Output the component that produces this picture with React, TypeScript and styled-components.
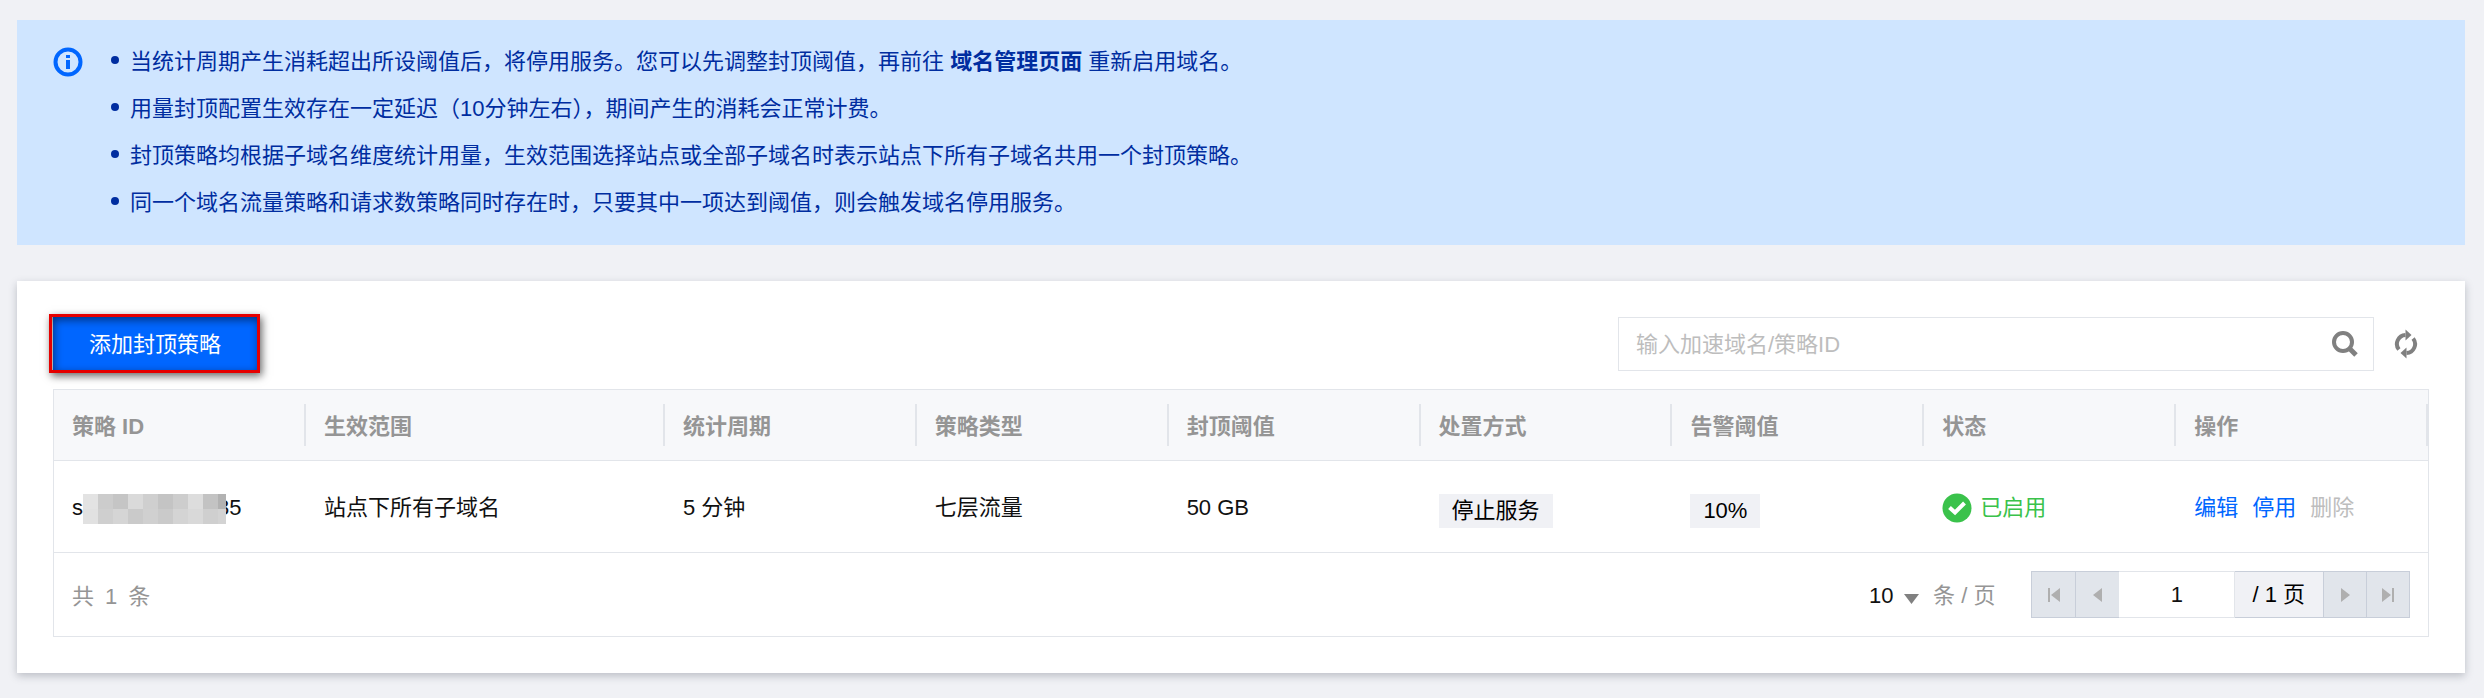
import React from "react";
import styled, { createGlobalStyle, css } from "styled-components";

const color = {
  page: "#f0f1f5",
  line: "#e2e5ea",
  control: "#e1e5eb",
  controlLine: "#c8ced9",
  brand: "#0066ff",
  notice: "#002da0",
  text: "#111111",
  muted: "#959595",
  faint: "#bdbdbd",
  success: "#3ac24b",
};

const GlobalStyle = createGlobalStyle`
  * { box-sizing: border-box; }
  body {
    margin: 0;
    background: ${color.page};
    color: ${color.text};
    font-family: "Liberation Sans", "Noto Sans CJK SC", sans-serif;
    font-size: 22px;
    line-height: 32px;
  }
  button, input, select { font: inherit; color: inherit; margin: 0; padding: 0; }
`;

const Page = styled.main`
  display: flex;
  flex-direction: column;
  gap: 36px;
  padding: 20px 19px 25px 17px;
`;

const Notice = styled.section`
  display: flex;
  gap: 28px;
  padding: 18px 36px 19px;
  background: #cfe5ff;
  color: ${color.notice};
`;

const NoticeIcon = styled.svg`
  flex: none;
  width: 30px;
  height: 30px;
  margin-top: 9px;
`;

const NoticeList = styled.ul`
  margin: 0;
  padding: 0;
  list-style: none;
`;

const NoticeItem = styled.li`
  display: flex;
  align-items: center;
  gap: 11px;
  line-height: 47px;

  &::before {
    content: "";
    flex: none;
    width: 8px;
    height: 8px;
    margin-bottom: 3px;
    border-radius: 50%;
    background: currentColor;
  }
`;

const NoticeLink = styled.a`
  color: inherit;
  font-weight: 700;
  text-decoration: none;
`;

const Card = styled.section`
  padding: 36px;
  background: #ffffff;
  box-shadow: 0 3px 8px rgba(40, 45, 60, 0.26);
`;

const Toolbar = styled.div`
  display: flex;
  align-items: center;
  margin-bottom: 18px;
`;

const PrimaryButton = styled.button`
  position: relative;
  height: 54px;
  padding: 2px 36px 0;
  border: 0;
  background: ${color.brand};
  color: #ffffff;
  white-space: nowrap;

  &::after {
    content: "";
    position: absolute;
    inset: -3px -3px -2px -4px;
    border: 3px solid #e60000;
    box-shadow: 2px 3px 8px rgba(0, 0, 0, 0.6), inset 2px 3px 8px rgba(0, 0, 0, 0.5);
    pointer-events: none;
  }
`;

const SearchBox = styled.form`
  display: flex;
  align-items: center;
  flex: 0 1 756px;
  height: 54px;
  margin-left: auto;
  border: 1px solid ${color.line};
`;

const SearchInput = styled.input`
  flex: 1;
  min-width: 0;
  height: 52px;
  padding: 2px 0 0 17px;
  border: 0;
  background: transparent;
  outline: none;

  &::placeholder { color: ${color.faint}; opacity: 1; }
`;

const IconButton = styled.button`
  display: flex;
  align-items: center;
  justify-content: center;
  width: 56px;
  height: 52px;
  border: 0;
  background: transparent;
  color: #808080;
`;

const RefreshButton = styled(IconButton)`
  width: 46px;
  margin-left: 9px;
`;

const TableFrame = styled.div`
  border: 1px solid ${color.line};
`;

const Table = styled.table`
  width: 100%;
  table-layout: fixed;
  border-collapse: separate;
  border-spacing: 0;
`;

const Column = styled.col<{ $wide?: boolean }>`
  width: ${(p) => (p.$wide ? "auto" : "10.61%")};
`;

const HeadCell = styled.th`
  height: 71px;
  padding: 0;
  border-bottom: 1px solid ${color.line};
  background: #f7f8fa;
  color: ${color.muted};
  text-align: left;
`;

const HeadLabel = styled.div`
  height: 42px;
  padding-left: 18px;
  border-right: 2px solid ${color.line};
  line-height: 46px;
`;

const Cell = styled.td`
  height: 92px;
  padding: 2px 0 0 18px;
  border-bottom: 1px solid ${color.line};
  white-space: nowrap;
`;

const Inline = styled.div<{ $gap?: number }>`
  display: flex;
  align-items: center;
  gap: ${(p) => p.$gap ?? 0}px;
`;

const Mosaic = styled.svg`
  position: relative;
  z-index: 1;
  flex: none;
  margin: 2px -9px 0 0;
`;

const Tag = styled.span`
  display: block;
  width: fit-content;
  height: 34px;
  margin-top: 6px;
  padding: 0 13px;
  background: ${color.page};
  color: #000000;
  line-height: 34px;
`;

const Status = styled(Inline)`
  color: ${color.success};
`;

const ActionButton = styled.button`
  border: 0;
  background: transparent;
  color: ${color.brand};

  &:disabled { color: ${color.faint}; }
`;

const Footer = styled.div`
  display: flex;
  align-items: center;
  height: 83px;
  padding: 0 18px;
`;

const Total = styled(Inline)`
  margin-right: auto;
  padding-top: 4px;
  color: ${color.muted};
`;

const PageSize = styled.label`
  display: flex;
  align-items: center;
  gap: 14px;
  margin-right: 36px;
  padding-top: 2px;
  color: ${color.muted};
`;

const SelectWrap = styled.span`
  position: relative;
  display: block;
`;

const Select = styled.select`
  display: block;
  width: 50px;
  height: 32px;
  appearance: none;
  border: 0;
  background: transparent;
  color: ${color.text};
`;

const Caret = styled.svg`
  position: absolute;
  right: 0;
  top: 14px;
  pointer-events: none;
`;

const Pager = styled.nav`
  display: flex;
  height: 47px;
`;

const segment = css`
  height: 47px;
  border: 1px solid ${color.controlLine};
  border-left-width: 0;
`;

const PagerButton = styled.button<{ $first?: boolean; $open?: boolean }>`
  ${segment}
  display: flex;
  align-items: center;
  justify-content: center;
  width: ${(p) => (p.$first ? 45 : 43)}px;
  border-left-width: ${(p) => (p.$first ? 1 : 0)}px;
  border-right-width: ${(p) => (p.$open ? 0 : 1)}px;
  background: ${color.control};
  color: #afafaf;
`;

const PageInput = styled.input`
  ${segment}
  width: 116px;
  border-color: ${color.line};
  background: #ffffff;
  text-align: center;
  outline: none;
`;

const PageCount = styled.span`
  ${segment}
  padding: 0 18px 0 17px;
  background: ${color.page};
  color: #000000;
  line-height: 45px;
`;

const mosaicRows = [
  ["#e3e3e3", "#cccccc", "#c5c5c5", "#dadada", "#cfcfcf", "#c4c4c4", "#cdcdcd", "#dddddd", "#c3c3c3", "#b2b2b2"],
  ["#e1e1e1", "#cfcfcf", "#d5d5d5", "#cacaca", "#d0d0d0", "#cacaca", "#d4d4d4", "#d9d9d9", "#cfcfcf", "#d3d3d3"],
];

const headings = ["策略 ID", "生效范围", "统计周期", "策略类型", "封顶阈值", "处置方式", "告警阈值", "状态", "操作"];

function ArrowIcon({ forward, bar }: { forward?: boolean; bar?: boolean }) {
  return (
    <svg width="14" height="14" viewBox="0 0 14 14" aria-hidden="true" fill="currentColor">
      <g transform={forward ? "rotate(180 7 7)" : undefined}>
        <path d={bar ? "M13 0V14L4 7Z" : "M11 0V14L2 7Z"} />
        {bar && <path d="M1 0h2v14H1Z" />}
      </g>
    </svg>
  );
}

function RefreshHalf() {
  return (
    <>
      <path d="M4.9 20.6A9 9 0 0 1 11.5 6" fill="none" stroke="currentColor" strokeWidth="4" />
      <path d="M11.5 0.5L17.5 6L11.5 11.5Z" fill="currentColor" />
    </>
  );
}

export default function App() {
  return (
    <>
      <GlobalStyle />
      <Page>
        <Notice>
          <NoticeIcon viewBox="0 0 30 30" aria-hidden="true">
            <circle cx="15" cy="15" r="12.5" fill="none" stroke={color.brand} strokeWidth="4" />
            <path d="M13 8h4v3h-4ZM13 13h4v9h-4Z" fill={color.brand} />
          </NoticeIcon>
          <NoticeList>
            <NoticeItem>
              <span>
                当统计周期产生消耗超出所设阈值后，将停用服务。您可以先调整封顶阈值，再前往{" "}
                <NoticeLink href="#domains">域名管理页面</NoticeLink> 重新启用域名。
              </span>
            </NoticeItem>
            <NoticeItem>用量封顶配置生效存在一定延迟（10分钟左右），期间产生的消耗会正常计费。</NoticeItem>
            <NoticeItem>封顶策略均根据子域名维度统计用量，生效范围选择站点或全部子域名时表示站点下所有子域名共用一个封顶策略。</NoticeItem>
            <NoticeItem>同一个域名流量策略和请求数策略同时存在时，只要其中一项达到阈值，则会触发域名停用服务。</NoticeItem>
          </NoticeList>
        </Notice>

        <Card>
          <Toolbar>
            <PrimaryButton type="button">添加封顶策略</PrimaryButton>
            <SearchBox role="search" onSubmit={(e) => e.preventDefault()}>
              <SearchInput type="text" aria-label="输入加速域名/策略ID" placeholder="输入加速域名/策略ID" />
              <IconButton type="submit" aria-label="搜索">
                <svg width="26" height="26" viewBox="0 0 26 26" fill="none" stroke="currentColor" strokeWidth="4">
                  <circle cx="11" cy="11" r="9" />
                  <path d="M17 17L24 24" strokeWidth="5" />
                </svg>
              </IconButton>
            </SearchBox>
            <RefreshButton type="button" aria-label="刷新">
              <svg width="24" height="30" viewBox="0 0 24 30" aria-hidden="true">
                <RefreshHalf />
                <g transform="rotate(180 12 15)">
                  <RefreshHalf />
                </g>
              </svg>
            </RefreshButton>
          </Toolbar>

          <TableFrame>
            <Table>
              <colgroup>
                {headings.map((h, i) => (
                  <Column key={h} $wide={i === 1} />
                ))}
              </colgroup>
              <thead>
                <tr>
                  {headings.map((h) => (
                    <HeadCell key={h} scope="col">
                      <HeadLabel>{h}</HeadLabel>
                    </HeadCell>
                  ))}
                </tr>
              </thead>
              <tbody>
                <tr>
                  <Cell>
                    <Inline>
                      <span>s</span>
                      <Mosaic width="143" height="30" viewBox="0 0 143 30" aria-hidden="true" shapeRendering="crispEdges">
                        {mosaicRows.map((row, y) =>
                          row.map((fill, x) => (
                            <rect key={`${x}-${y}`} x={x * 15} y={y * 15} width="15" height="15" fill={fill} />
                          ))
                        )}
                      </Mosaic>
                      <span>35</span>
                    </Inline>
                  </Cell>
                  <Cell>站点下所有子域名</Cell>
                  <Cell>5 分钟</Cell>
                  <Cell>七层流量</Cell>
                  <Cell>50 GB</Cell>
                  <Cell>
                    <Tag>停止服务</Tag>
                  </Cell>
                  <Cell>
                    <Tag>10%</Tag>
                  </Cell>
                  <Cell>
                    <Status $gap={8}>
                      <svg width="30" height="30" viewBox="0 0 30 30" aria-hidden="true">
                        <circle cx="15" cy="15" r="14.5" fill={color.success} />
                        <path d="M7.5 14.5L13 19.5L22.5 10" fill="none" stroke="#ffffff" strokeWidth="4" />
                      </svg>
                      <span>已启用</span>
                    </Status>
                  </Cell>
                  <Cell>
                    <Inline $gap={14}>
                      <ActionButton type="button">编辑</ActionButton>
                      <ActionButton type="button">停用</ActionButton>
                      <ActionButton type="button" disabled>
                        删除
                      </ActionButton>
                    </Inline>
                  </Cell>
                </tr>
              </tbody>
            </Table>
            <Footer>
              <Total $gap={11}>
                <span>共</span>
                <span>1</span>
                <span>条</span>
              </Total>
              <PageSize>
                <SelectWrap>
                  <Select defaultValue="10">
                    <option value="10">10</option>
                  </Select>
                  <Caret width="15" height="10" viewBox="0 0 15 10" aria-hidden="true">
                    <path d="M0 0H15L7.5 10Z" fill="#808080" />
                  </Caret>
                </SelectWrap>
                <span>条 / 页</span>
              </PageSize>
              <Pager aria-label="分页">
                <PagerButton type="button" aria-label="第一页" $first>
                  <ArrowIcon bar />
                </PagerButton>
                <PagerButton type="button" aria-label="上一页" $open>
                  <ArrowIcon />
                </PagerButton>
                <PageInput type="text" aria-label="页码" defaultValue="1" />
                <PageCount>/ 1 页</PageCount>
                <PagerButton type="button" aria-label="下一页">
                  <ArrowIcon forward />
                </PagerButton>
                <PagerButton type="button" aria-label="最后一页">
                  <ArrowIcon forward bar />
                </PagerButton>
              </Pager>
            </Footer>
          </TableFrame>
        </Card>
      </Page>
    </>
  );
}
